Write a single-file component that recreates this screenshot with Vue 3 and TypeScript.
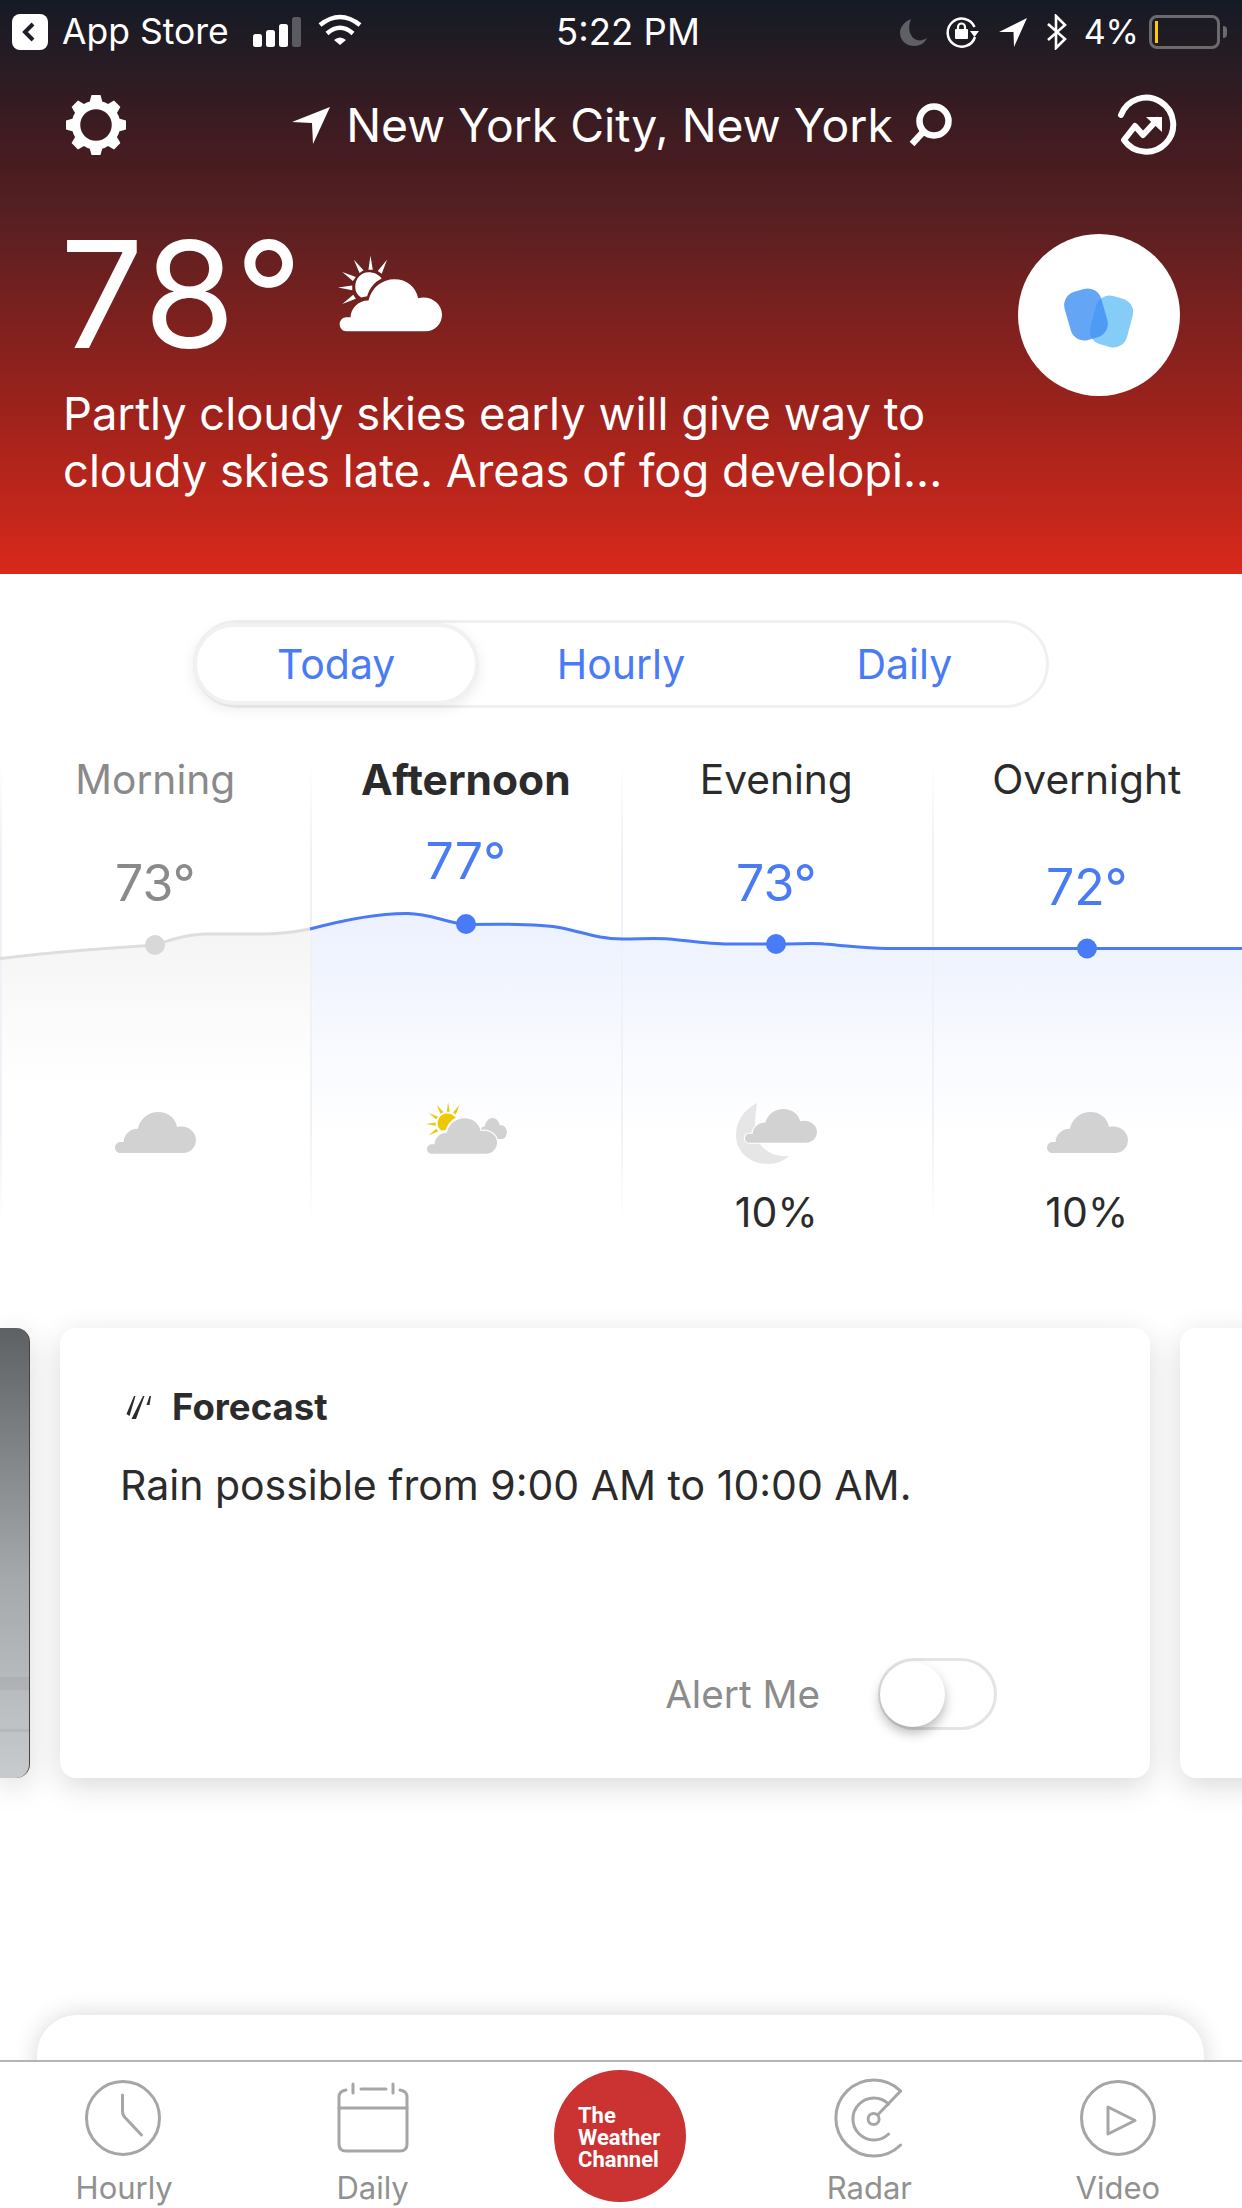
<template>
  <div class="screen">
    <header class="header">
      <div class="status">
        <div class="status-left">
          <span class="back-box">
            <svg width="36" height="36" viewBox="0 0 36 36"><path d="M21 10 L13 18 L21 26" fill="none" stroke="#1c2029" stroke-width="4" /></svg>
          </span>
          <span class="status-text app-store">App Store</span>
          <svg class="signal" width="48" height="30" viewBox="0 0 48 30">
            <rect x="0" y="17" width="9" height="13" rx="2.5" fill="#fff" />
            <rect x="13" y="13" width="9" height="17" rx="2.5" fill="#fff" />
            <rect x="26" y="7" width="9" height="23" rx="2.5" fill="#fff" />
            <rect x="39" y="0" width="9" height="30" rx="2.5" fill="#5a5a60" />
          </svg>
          <svg class="wifi" width="46" height="36" viewBox="0 0 46 36" fill="none" stroke="#fff" stroke-width="4.5">
            <path d="M3 13 Q23 -3 43 13" />
            <path d="M10 21.5 Q23 10 36 21.5" />
            <path d="M17 28 Q23 23 29 28 L23 33 Z" fill="#fff" stroke="none" />
          </svg>
        </div>
        <span class="status-text status-time">5:22 PM</span>
        <div class="status-right">
          <svg width="28" height="28" viewBox="0 0 28 28"><path d="M11 1 C4 4 0 9 0 15 C0 22 6 28 14 28 C20 28 25 25 27 20 C24 22 20 23 17 22 C10 20 7 10 11 1 Z" fill="#5f5f66" /></svg>
          <svg class="rotate-lock" width="36" height="32" viewBox="0 0 36 32">
            <path d="M30 21 A14 14 0 1 1 29.5 11" fill="none" stroke="#fff" stroke-width="2.5" />
            <path d="M25 15 L34 15 L29.5 21 Z" fill="#fff" />
            <path d="M13 13 V11 A3.5 3.5 0 0 1 20 11 V13" fill="none" stroke="#fff" stroke-width="2.2" />
            <rect x="10" y="13" width="13" height="10" rx="1" fill="#fff" />
          </svg>
          <svg class="status-arrow" width="30" height="30" viewBox="0 0 30 30"><path d="M1 15 L29 1 L16 30 L15.5 15 Z" fill="#fff" /></svg>
          <svg class="bluetooth" width="22" height="36" viewBox="0 0 22 36"><path d="M2 10 L19 25 L10 34 V2 L19 11 L2 26" fill="none" stroke="#fff" stroke-width="2.6" /></svg>
          <span class="status-text percent">4%</span>
          <span class="battery"><span class="battery-level"></span></span>
          <span class="battery-nub"></span>
        </div>
      </div>

      <nav class="nav">
        <svg width="64" height="64" viewBox="-32 -32 64 64">
          <circle r="20" fill="none" stroke="#fff" stroke-width="8.5" />
          <polygon v-for="a in gearTeeth" :key="a" points="-7,-21 -4.5,-30 4.5,-30 7,-21" fill="#fff" :transform="`rotate(${a})`" />
        </svg>
        <div class="place">
          <svg width="40" height="40" viewBox="0 0 40 40"><path d="M1 17 L39 2 L22 39 L21 18 Z" fill="#fff" /></svg>
          <span class="place-name">New York City, New York</span>
          <svg width="44" height="44" viewBox="0 0 44 44" fill="none" stroke="#fff" stroke-width="6.5">
            <circle cx="26" cy="18" r="14.5" />
            <path d="M16 28 L4 41" />
          </svg>
        </div>
        <svg width="64" height="64" viewBox="0 0 64 64" fill="none" stroke="#fff" stroke-width="6" stroke-linecap="round" stroke-linejoin="round">
          <path d="M6 22 A27 27 0 1 1 9 47 L20 33 L28 42 L42 27" />
          <path d="M31 24 H47 V39 Z" fill="#fff" stroke="none" />
        </svg>
      </nav>

      <section class="hero">
        <div class="hero-main">
          <div class="hero-temp">
            <span class="temp-big">78°</span>
            <svg class="hero-icon" width="104" height="77" viewBox="170 495 314 230" fill="#fff">
              <path :d="sunPath" />
              <path :d="raysPath" />
              <path :d="cloudPath" />
            </svg>
          </div>
          <p class="hero-desc">Partly cloudy skies early will give way to<br />cloudy skies late. Areas of fog developi...</p>
        </div>
        <div class="hero-badge">
          <svg width="162" height="162" viewBox="0 0 162 162">
            <rect x="74.5" y="62.5" width="38" height="50" rx="14" fill="#85cdf7" transform="rotate(15 93.5 87.5)" />
            <rect x="49" y="55.5" width="38" height="50" rx="14" fill="#3f8ff3" fill-opacity="0.8" transform="rotate(-16 68 80.5)" />
          </svg>
        </div>
      </section>
    </header>

    <main class="content">
      <div class="segments">
        <span v-for="(s, i) in segments" :key="s" class="segment" :class="{ active: i === 0 }">{{ s }}</span>
      </div>

      <section class="forecast">
        <svg class="chart" width="1242" height="492" viewBox="0 750 1242 492">
          <defs>
            <linearGradient id="fillBlue" gradientUnits="userSpaceOnUse" x1="0" y1="915" x2="0" y2="1135">
              <stop offset="0" stop-color="#ecf1fe" />
              <stop offset="1" stop-color="#ffffff" />
            </linearGradient>
            <linearGradient id="fillGrey" gradientUnits="userSpaceOnUse" x1="0" y1="935" x2="0" y2="1085">
              <stop offset="0" stop-color="#f5f5f5" />
              <stop offset="1" stop-color="#ffffff" />
            </linearGradient>
            <linearGradient id="divider" gradientUnits="userSpaceOnUse" x1="0" y1="760" x2="0" y2="1225">
              <stop offset="0" stop-color="#eff1f6" stop-opacity="0" />
              <stop offset="0.2" stop-color="#eff1f6" />
              <stop offset="0.8" stop-color="#f1f2f7" />
              <stop offset="1" stop-color="#f1f2f7" stop-opacity="0" />
            </linearGradient>
          </defs>
          <path :d="`${greyLine} L310 1240 L0 1240 Z`" fill="url(#fillGrey)" />
          <path :d="`${blueLine} L1242 1240 L310 1240 Z`" fill="url(#fillBlue)" />
          <rect v-for="x in dividers" :key="x" :x="x" y="760" width="2" height="465" fill="url(#divider)" />
          <path :d="greyLine" fill="none" stroke="#dedede" stroke-width="3" />
          <path :d="blueLine" fill="none" stroke="#4a7bf7" stroke-width="3" />
          <circle cx="155" cy="945" r="10" fill="#d8d8d8" />
          <circle cx="466" cy="924" r="10" fill="#4a7bf7" />
          <circle cx="776" cy="944" r="10" fill="#4a7bf7" />
          <circle cx="1087" cy="948.5" r="10" fill="#4a7bf7" />
        </svg>

        <div v-for="p in periods" :key="p.name" class="period" :class="{ past: p.past, current: p.current }">
          <div class="period-name">{{ p.name }}</div>
          <div class="period-slot">
            <div class="period-temp" :style="{ marginTop: p.tempTop + 'px' }">{{ p.temp }}</div>
          </div>
          <svg class="period-icon" width="90" height="64" viewBox="0 0 90 64">
            <g v-if="p.icon === 'cloud'" transform="translate(-40.85 -136.6) scale(.262)">
              <path :d="cloudPath" fill="#d2d2d2" />
            </g>
            <template v-else-if="p.icon === 'sun'">
              <path :d="cloudPath" fill="#d2d2d2" transform="translate(37.5 -57.4) scale(.1 .133)" />
              <g transform="translate(-33.6 -110.2) scale(.2265)">
                <path :d="raysPath" fill="#ecc806" />
                <path :d="sunPath" fill="#ecc806" />
                <path :d="cloudPath" fill="#d2d2d2" stroke="#fff" stroke-width="10" paint-order="stroke" />
              </g>
            </template>
            <template v-else>
              <path d="M26 3 C12 10 5 22 5 35 C5 52 19 64 37 64 C45 64 53 61 58 56 C40 58 24 46 24 28 C24 18 25 10 26 3 Z" fill="#e6e6e6" />
              <path :d="cloudPath" fill="#d2d2d2" stroke="#fff" stroke-width="10" paint-order="stroke" transform="translate(-26.8 -112.9) scale(.233 .215)" />
            </template>
          </svg>
          <div class="period-chance">{{ p.chance }}</div>
        </div>
      </section>

      <section class="carousel">
        <div class="peek-left"></div>
        <article class="card">
          <div class="card-title">
            <svg width="26" height="26" viewBox="0 0 26 26" fill="#2b2b2b">
              <path d="M8 2 L9.5 2 L3.5 22 L0.5 20 Z" />
              <path d="M17 2 L18.5 2 L10 25 L5.5 25 Z" />
              <path d="M23.5 2 L25 2 L23.5 11 L20.5 11 Z" />
            </svg>
            <span>Forecast</span>
          </div>
          <p class="card-text">Rain possible from 9:00 AM to 10:00 AM.</p>
          <div class="card-alert">
            <span class="alert-label">Alert Me</span>
            <span class="toggle"><span class="toggle-knob"></span></span>
          </div>
        </article>
        <div class="peek-right"></div>
      </section>

      <div class="next-card"></div>
    </main>

    <footer class="tabbar">
      <div v-for="t in tabs" :key="t.icon" class="tab">
        <div v-if="t.icon === 'logo'" class="logo">
          <span>The</span>
          <span>Weather</span>
          <span>Channel</span>
        </div>
        <svg v-else width="80" height="80" viewBox="0 0 80 80" fill="none" stroke="#a6a6a6" stroke-width="3" stroke-linecap="round" stroke-linejoin="round">
          <template v-if="t.icon === 'clock'">
            <circle cx="39" cy="40" r="36.5" />
            <path d="M38.5 17 V33 Q38.5 37 41 39.5 L57.5 57" />
          </template>
          <template v-else-if="t.icon === 'calendar'">
            <path d="M6 30 V66 Q6 73 13 73 H67 Q74 73 74 66 V30 Z" />
            <path d="M6 30 V19 Q6 13 13 12 M67 12 Q74 13 74 19 V30" />
            <path d="M20 6 V15 M60 6 V15 M28 11 H53" />
          </template>
          <g v-else-if="t.icon === 'radar'" transform="translate(4.6 0)">
            <path d="M67 13 A38 38 0 1 0 67 67" />
            <path d="M55 26 A21 21 0 1 0 55 56" />
            <circle cx="40" cy="41" r="5.5" />
            <path d="M44 37 L67 13" />
          </g>
          <template v-else>
            <circle cx="40" cy="40" r="36.5" />
            <path d="M30 29 V56 L57 42.5 Z" />
          </template>
        </svg>
        <span v-if="t.label" class="tab-label">{{ t.label }}</span>
      </div>
    </footer>
  </div>
</template>

<script setup lang="ts">
type WeatherIcon = 'cloud' | 'sun' | 'moon'

interface Period {
  name: string
  temp: string
  tempTop: number
  icon: WeatherIcon
  chance: string
  past?: boolean
  current?: boolean
}

const segments = ['Today', 'Hourly', 'Daily']

const periods: Period[] = [
  { name: 'Morning', temp: '73°', tempTop: 43, icon: 'cloud', chance: '', past: true },
  { name: 'Afternoon', temp: '77°', tempTop: 21, icon: 'sun', chance: '', current: true },
  { name: 'Evening', temp: '73°', tempTop: 43, icon: 'moon', chance: '10%' },
  { name: 'Overnight', temp: '72°', tempTop: 47, icon: 'cloud', chance: '10%' },
]

const tabs = [
  { label: 'Hourly', icon: 'clock' },
  { label: 'Daily', icon: 'calendar' },
  { label: '', icon: 'logo' },
  { label: 'Radar', icon: 'radar' },
  { label: 'Video', icon: 'video' },
]

const gearTeeth = [0, 45, 90, 135, 180, 225, 270, 315]
const dividers = [0, 310, 621, 932]

const cloudPath =
  'M195 724 C183 724 175 714 175 703 C175 692 184 682 195 682 L208 682 C208 655 232 630 262 631 C272 590 305 567 340 567 C378 567 405 590 412 624 C450 615 484 640 484 674 C484 702 462 724 435 724 Z'
const sunPath =
  'M302 565 C292 552 278 546 262 546 C240 546 222 565 222 590 C222 603 228 615 240 622 L258 618 C265 595 280 575 302 565 Z'
const raysPath =
  'M268 495 L275 538 L262 538 Z M318 508 L302 550 L290 542 Z M218 508 L247 540 L235 548 Z M183 545 L224 560 L215 572 Z M170 592 L213 586 L213 600 Z M183 642 L216 614 L224 626 Z'

const greyLine = 'M0 958.6 C50 952 100 949 155 945 C175 938 190 934 206 934 L261 934 C280 934 295 932 310 929'
const blueLine =
  'M310 929 C340 921 375 913 408 913.5 C430 914 445 922 466 924.5 C490 924 540 923 562 928 C585 933 600 939 622 939 C640 939 655 938 669 939 C690 941 710 944 729 944 L776 944 C800 944 815 943 824 944 C850 946 865 948.5 887 948.5 L1242 948.5'
</script>

<style>
html,
body {
  margin: 0;
  background: #fff;
}
</style>

<style scoped>
.screen {
  width: 1242px;
  height: 2208px;
  display: flex;
  flex-direction: column;
  overflow: hidden;
  font-family: Inter, 'Liberation Sans', sans-serif;
  color: #2b2b2b;
}

.header {
  height: 574px;
  flex: none;
  color: #fff;
  background: linear-gradient(#141b25 0%, #4a1c20 29.6%, #521f22 35%, #9a221c 70%, #d9291b 100%);
}

.status {
  height: 64px;
  display: grid;
  grid-template-columns: 556px 144px 1fr;
  align-items: center;
}

.status-left,
.status-right {
  display: flex;
  align-items: center;
}

.status-left {
  padding-left: 12px;
}

.status-right {
  justify-content: flex-end;
  padding-right: 15px;
}

.status-text {
  font-size: 34px;
  line-height: 40px;
}

.status-time {
  font-size: 36.5px;
  text-align: center;
  white-space: nowrap;
}

.back-box {
  width: 36px;
  height: 36px;
  background: #fff;
  border-radius: 8px;
}

.back-box svg {
  display: block;
}

.app-store {
  margin-left: 14px;
  font-size: 35.5px;
}

.signal {
  margin-left: 24px;
}

.wifi {
  margin-left: 16px;
  margin-top: -4px;
}

.rotate-lock {
  margin-left: 17px;
}

.status-arrow {
  margin-left: 17px;
}

.bluetooth {
  margin-left: 18px;
}

.percent {
  margin-left: 16px;
}

.battery {
  width: 71px;
  height: 34px;
  margin-left: 10px;
  box-sizing: border-box;
  border: 3px solid #6b6b6e;
  border-radius: 8px;
  padding: 3px;
}

.battery-level {
  display: block;
  width: 3px;
  height: 100%;
  background: #fecb00;
}

.battery-nub {
  width: 4px;
  height: 12px;
  margin-left: 3px;
  background: #6b6b6e;
  border-radius: 0 4px 4px 0;
}

.nav {
  height: 122px;
  display: flex;
  align-items: center;
  justify-content: space-between;
  padding: 0 63px 0 64px;
}

.place {
  display: flex;
  align-items: center;
}

.place-name {
  font-size: 46.3px;
  line-height: 60px;
  margin: 0 15px;
}

.hero {
  display: flex;
  justify-content: space-between;
  margin-top: 48px;
  padding: 0 62px 0 63px;
}

.hero-temp {
  height: 151px;
  display: flex;
}

.temp-big {
  font-size: 148px;
  line-height: 121px;
  letter-spacing: 2px;
  margin-left: -3px;
}

.hero-icon {
  margin: 21px 0 0 34px;
}

.hero-desc {
  margin: 0;
  font-size: 45.3px;
  line-height: 57px;
  white-space: nowrap;
}

.hero-badge {
  width: 162px;
  height: 162px;
  border-radius: 50%;
  background: #fff;
}

.content {
  flex: 1;
  min-height: 0;
  overflow: hidden;
  padding-top: 46px;
}

.segments {
  width: 856px;
  height: 88px;
  margin: 0 auto;
  box-sizing: border-box;
  display: grid;
  grid-template-columns: repeat(3, 1fr);
  border: 3px solid #f0f0f0;
  border-radius: 44px;
}

.segment {
  display: flex;
  align-items: center;
  justify-content: center;
  font-size: 41px;
  color: #4a7bf7;
  border-radius: 44px;
}

.segment.active {
  border: 4px solid #f1f1f1;
  margin-left: -3px;
  background: #fff;
  box-shadow: 0 4px 14px rgba(0, 0, 0, 0.08);
}

.forecast {
  position: relative;
  height: 492px;
  margin-top: 42px;
  display: grid;
  grid-template-columns: repeat(4, 1fr);
}

.chart {
  position: absolute;
  left: 0;
  top: 0;
}

.period {
  position: relative;
  display: flex;
  flex-direction: column;
  align-items: center;
  text-align: center;
}

.period-name {
  font-size: 40.7px;
  line-height: 60px;
}

.period-slot {
  height: 290px;
}

.period-temp {
  font-size: 50px;
  line-height: 60px;
  color: #4a7bf7;
}

.period-icon {
  flex: none;
}

.period-chance {
  margin-top: 18px;
  font-size: 41px;
  line-height: 60px;
}

.past .period-name,
.past .period-temp {
  color: #8a8a8a;
}

.current .period-name {
  font-size: 42.5px;
  font-weight: 700;
}

.carousel {
  display: flex;
  gap: 30px;
  overflow: hidden;
  padding: 50px 0 60px;
  margin-top: 36px;
}

.peek-left {
  width: 30px;
  flex: none;
  height: 450px;
  box-sizing: border-box;
  border-right: 1px solid #444;
  border-radius: 0 14px 14px 0;
  background:
    linear-gradient(transparent 349px, rgba(0, 0, 0, 0.05) 349px, rgba(0, 0, 0, 0.05) 362px, transparent 362px, transparent 401px, rgba(0, 0, 0, 0.06) 401px, rgba(0, 0, 0, 0.06) 404px, transparent 404px),
    linear-gradient(#5e6163, #a5a8ab 55%, #c8cbce);
  box-shadow: 0 8px 30px rgba(0, 0, 0, 0.15);
}

.card {
  width: 1090px;
  height: 450px;
  flex: none;
  box-sizing: border-box;
  padding: 61px 60px 0;
  border-radius: 16px;
  background: #fff;
  box-shadow: 0 8px 30px rgba(0, 0, 0, 0.15);
  display: flex;
  flex-direction: column;
}

.peek-right {
  width: 200px;
  height: 450px;
  flex: none;
  border-radius: 16px;
  background: #fff;
  box-shadow: 0 8px 30px rgba(0, 0, 0, 0.15);
}

.card-title {
  height: 36px;
  display: flex;
  align-items: center;
  gap: 20px;
  padding-left: 6px;
  font-size: 36.6px;
  font-weight: 700;
}

.card-text {
  margin: 35px 0 0;
  font-size: 41px;
  line-height: 50px;
}

.card-alert {
  margin-top: auto;
  margin-bottom: 48px;
  display: flex;
  align-items: center;
  justify-content: flex-end;
  gap: 58px;
  padding-right: 93px;
}

.alert-label {
  font-size: 38.7px;
  color: #8c8c8c;
}

.toggle {
  width: 119px;
  height: 72px;
  box-sizing: border-box;
  border: 3px solid #e4e4e4;
  border-radius: 36px;
  position: relative;
}

.toggle-knob {
  position: absolute;
  left: -1px;
  top: 1px;
  width: 65px;
  height: 65px;
  border-radius: 50%;
  background: #fff;
  box-shadow: 0 6px 12px rgba(0, 0, 0, 0.28);
}

.next-card {
  height: 100px;
  margin: 177px 38px 0 37px;
  border-radius: 40px 40px 0 0;
  background: #fff;
  box-shadow: 0 0 24px rgba(0, 0, 0, 0.16);
}

.tabbar {
  height: 148px;
  flex: none;
  box-sizing: border-box;
  display: grid;
  grid-template-columns: repeat(5, 1fr);
  border-top: 2px solid #b4b4b4;
  background: #fff;
}

.tab {
  display: flex;
  flex-direction: column;
  align-items: center;
  padding-top: 16px;
}

.tab-label {
  margin-top: 10px;
  font-size: 31px;
  line-height: 40px;
  color: #919191;
}

.logo {
  width: 132px;
  height: 132px;
  flex: none;
  margin: -8px 0 0 -2px;
  box-sizing: border-box;
  padding: 35px 0 0 24px;
  border-radius: 50%;
  background: #cb3232;
  color: #fff;
  display: flex;
  flex-direction: column;
  font-family: Roboto, 'Liberation Sans', sans-serif;
  font-weight: 700;
  font-size: 22px;
  line-height: 22px;
}
</style>
